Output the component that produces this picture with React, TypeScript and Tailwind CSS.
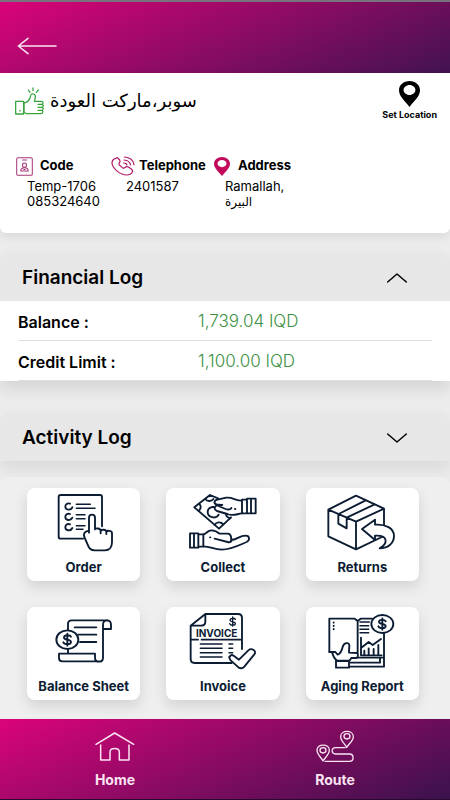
import React, { useState } from 'react';

const stroke = {
  fill: 'none',
  stroke: 'currentColor',
  strokeLinecap: 'round' as const,
  strokeLinejoin: 'round' as const,
};

function BackArrow() {
  return (
    <svg viewBox="0 0 120 54" className="h-[18px] w-10" {...stroke} strokeWidth="4.5" aria-hidden="true">
      <path d="M117 27H4M33 4 4 27l29 23" />
    </svg>
  );
}

function ThumbUp() {
  return (
    <svg viewBox="44 262 87 84" className="h-7 w-[29px]" {...stroke} strokeWidth="3.8" aria-hidden="true">
      <path d="M46 305h24v38H46zM59 332v2M98 265v8M84 271l5 7M114 271l-6 7" />
      <path d="M70 309h5c9-3 13-10 15-17 1-8 4-10 9-9 5 1 7 5 6 11l-3 11h21c7 0 7 9 0 9h-10M123 314c8 0 8 9 0 9h-10M123 323c8 0 7 9 0 9h-10M123 332c6 0 6 10-1 10H82c-5 0-6-3-12-3M71 310v28" />
    </svg>
  );
}

function Pin({ className }: { className: string }) {
  return (
    <svg viewBox="0 0 64 78" className={className} fill="currentColor" preserveAspectRatio="none" aria-hidden="true">
      <path
        fillRule="evenodd"
        d="M32 0C14 0 0 12 0 28c0 19 19 33 32 50 13-17 32-31 32-50C64 12 50 0 32 0Zm0 12c10 0 18 7 18 15s-8 15-18 15-18-7-18-15 8-15 18-15Z"
      />
    </svg>
  );
}

function CodeBadge() {
  return (
    <svg viewBox="50 466 50 56" className="h-[19px] w-[17px]" {...stroke} strokeWidth="3" aria-hidden="true">
      <rect x="52" y="468" width="46" height="52" rx="4" />
      <path d="M69 475h12M64 507c0-8 5-9 11-9s11 1 11 9ZM73 503h4" />
      <circle cx="75" cy="490" r="6" />
    </svg>
  );
}

function Phone() {
  return (
    <svg viewBox="335 466 72 60" className="h-5 w-6 shrink-0" {...stroke} strokeWidth="3.6" aria-hidden="true">
      <path d="M350 473c-8 2-12 8-12 14 1 17 26 36 44 36 8 0 14-3 17-9 2-4 0-7-4-10l-8-5c-4-2-7-1-11 2-2 2-5 2-7 0l-9-8c-2-2-2-4 0-6 3-3 3-6 1-9l-6-6c-1-1-3-1-5 1Z" />
      <path d="M375 469c16 1 28 10 29 23M374 478c11 1 18 6 20 15M373 487c6 0 9 2 10 6" />
    </svg>
  );
}

function Chevron({ open }: { open: boolean }) {
  return (
    <svg viewBox="0 0 60 30" className="h-[10px] w-5" {...stroke} strokeWidth="4.5" aria-hidden="true">
      <path d={open ? 'M2 27 30 3l28 24' : 'M2 3l28 24L58 3'} />
    </svg>
  );
}

function TileIcon({ children }: { children: React.ReactNode }) {
  return (
    <svg viewBox="82 36 216 180" className="h-[60px] w-[72px]" {...stroke} strokeWidth="5.6" aria-hidden="true">
      {children}
    </svg>
  );
}

const orderIcon = (
  <TileIcon>
    <path d="M187 176h-67c-4 0-6-2-6-6V51c0-4 2-6 6-6h118c4 0 6 2 6 6v88" />
    <path d="M148 71c-8-3-14 2-14 9 0 10 16 13 21 2M148 102c-8-3-14 2-14 9 0 10 16 13 21 2M148 133c-8-3-14 2-14 9 0 10 16 13 21 2" />
    <path d="M167 73h42M167 85h56M167 104h26M167 116h26M167 137h26M167 148h20" strokeWidth="4.5" />
    <path
      d="M205 158v-45c0-12 18-12 18 0v35c2-4 16-4 17 4 3-4 16-4 17 3 4-4 17-4 17 5v27c0 14-8 24-21 24h-31c-11 0-17-6-20-15l-11-25c-3-9-1-17 14-19M240 152v8M257 154v8"
      fill="#fff"
    />
  </TileIcon>
);

const collectIcon = (
  <TileIcon>
    <path d="m151 45-47 37 74 64 36-34M151 45l24 10" />
    <path d="M137 57c3 7 18 9 24 0M118 71c8 6 6 15-1 22M165 135c4-9 18-11 26-2M200 98c-3 8 2 15 12 17" />
    <path d="M162 81c-11-1-18 6-18 15 0 16 25 23 33 8" />
    <path
      d="M247 62c-21 0-27-11-47-9l-27 6c-12 3-11 14 1 15l14 1-16 1c-10 4-9 14 0 17l31 9c16 7 25 1 44-2M176 78l22 9c8 3 16 1 17-3"
      fill="#fff"
    />
    <path d="M247 59h15v41h-15zM262 56h26v44h-26zM274 56v44" fill="#fff" />
    <path d="M226 87h1M91 160h25v43H91zM116 163h15v37h-15zM103 160v43" />
    <path d="M131 163c9 0 12-12 24-12 14 0 18 4 24 10h25c12 0 12 18 9 24M165 176l39 10c12 3 15-7 10-12M214 180c18 0 24-13 44-13 13 0 13 14 3 19-23 10-47 23-75 23-25 0-32-10-55-10M151 172h1" />
  </TileIcon>
);

const returnsIcon = (
  <TileIcon>
    <path d="m89 89 83-42 84 39v82l-84 40-83-39ZM89 89l83 36 84-39M172 125v83M120 102l81-41M144 113l84-40M119 103v28l25 14v-32" />
    <path
      d="m190 147 39-28v15c32-2 57 10 57 34 0 21-17 37-43 37 23-13 29-40-14-38v13Z"
      fill="#fff"
    />
  </TileIcon>
);

const balanceIcon = (
  <TileIcon>
    <path d="M142 93V75c0-7 4-11 11-11h105c8 0 13 5 13 13v13h-24M260 64c-8 0-13 5-13 13v99c0 16-24 16-24 0v-12H115v14c0 6 4 9 10 9h110M142 148v15" />
    <path d="M162 85h65M173 107h54M178 129h49" />
    <ellipse cx="140" cy="122" rx="33" ry="28" fill="#fff" />
    <path d="M151 113c-3-6-21-6-21 3 0 8 21 4 21 13 0 9-20 8-23 1M140 104v36" />
  </TileIcon>
);

const invoiceIcon = (
  <TileIcon>
    <path d="M93 80v100c0 7 5 12 12 12h111M247 150V57c0-7-5-12-12-12h-98L93 80h30c9 0 14-5 14-12V45M93 122h22M126 122h116" />
    <path d="M122 135h65M122 148h65M122 161h65M122 174h65M208 135h11M208 148h11M208 161h11M208 174h4" strokeWidth="4.5" />
    <path d="M227 61c-3-5-16-4-16 3 0 6 16 3 16 9 0 8-15 7-17 1M219 54v27" strokeWidth="4" />
    <text
      x="171"
      y="113"
      textAnchor="middle"
      fontSize="30"
      fontWeight="700"
      fontFamily="Inter, sans-serif"
      fill="currentColor"
      stroke="none"
    >
      INVOICE
    </text>
    <path
      d="m222 170 16 12 28-28c10-9 26 2 18 12l-30 37c-6 7-15 6-20 0l-21-19c-8-9 0-20 9-14Z"
      fill="#fff"
    />
  </TileIcon>
);

const agingIcon = (
  <TileIcon>
    <path d="M220 59h-34l-9 7v94M94 158H92V59h76l9 7M256 100v103H152M244 177v14h-88M177 176h79M105 70v1M105 80v1M105 90v1" />
    <path d="M184 69h28M184 80h26M184 91h26M184 101h26" strokeWidth="4.5" />
    <path d="M187 116v53h62M190 145l20-16 12 9 25-18M197 155v14M210 148v21M225 150v19M239 138v31" />
    <path
      d="M92 159h18l7 8c8-3 12-10 15-23 3-12 20-17 20-4l-1 21 24 1c4 0 4 15-3 15h-14l-6 9h-36c-10-8-14-18-16-27ZM112 185h39v21h-39z"
      fill="#fff"
    />
    <ellipse cx="251" cy="75" rx="33" ry="27" fill="#fff" />
    <path d="M261 67c-3-6-20-6-20 2 0 8 20 4 20 12 0 9-19 8-22 1M251 58v34" />
  </TileIcon>
);

const tiles = [
  { label: 'Order', icon: orderIcon },
  { label: 'Collect', icon: collectIcon },
  { label: 'Returns', icon: returnsIcon },
  { label: 'Balance Sheet', icon: balanceIcon },
  { label: 'Invoice', icon: invoiceIcon },
  { label: 'Aging Report', icon: agingIcon },
];

const balances = [
  { label: 'Balance :', value: '1,739.04 IQD' },
  { label: 'Credit Limit :', value: '1,100.00 IQD' },
];

function LogHeader({ title, open, onToggle }: { title: string; open: boolean; onToggle: () => void }) {
  return (
    <button
      type="button"
      aria-expanded={open}
      onClick={onToggle}
      className="flex h-[49px] w-full items-center justify-between rounded-t-xl bg-[#e7e7e7] pt-[3px] pr-[43px] pl-[22px] text-left text-[19px] font-semibold"
    >
      {title}
      <Chevron open={open} />
    </button>
  );
}

function Detail({ icon, title, children }: { icon: React.ReactNode; title: string; children: React.ReactNode }) {
  return (
    <div>
      <h2 className="flex h-5 items-center text-[13px] font-bold whitespace-nowrap">
        {icon}
        {title}
      </h2>
      <div className="mt-[3px] pl-[11px] text-[13px] leading-[15px]">{children}</div>
    </div>
  );
}

export default function App() {
  const [financialOpen, setFinancialOpen] = useState(true);
  const [activityOpen, setActivityOpen] = useState(false);

  return (
    <div className="flex min-h-screen flex-col bg-[#ececec] font-['Inter','DejaVu_Sans',sans-serif] text-black">
      <header className="flex h-[73px] items-center border-t-2 border-[#77727b] bg-[linear-gradient(157deg,#d60478_3%,#42134f_100%)] px-[17px] pt-[17px]">
        <button type="button" aria-label="Back" className="text-[#fbe4f2]">
          <BackArrow />
        </button>
      </header>

      <main>
        <section className="h-40 rounded-b-md bg-white pt-2 shadow-[0_4px_10px_rgba(0,0,0,0.08)]">
          <div className="flex items-start justify-between pr-[13px] pl-[15px]">
            <div className="flex items-center gap-1.5 pt-1.5">
              <span className="text-[#36a43c]">
                <ThumbUp />
              </span>
              <h1 dir="rtl" className="font-['DejaVu_Sans',sans-serif] text-lg leading-7">
                سوبر،ماركت العودة
              </h1>
            </div>
            <button type="button" className="flex flex-col items-center text-[9px] leading-3 font-bold">
              <Pin className="mb-[2px] h-[26px] w-[21px]" />
              Set Location
            </button>
          </div>

          <div className="grid grid-cols-[99px_99px_1fr] pt-[35px] pl-4">
            <Detail
              title="Code"
              icon={
                <span className="mr-[7px] text-[#a83678]">
                  <CodeBadge />
                </span>
              }
            >
              Temp-1706
              <br />
              085324640
            </Detail>
            <Detail
              title="Telephone"
              icon={
                <span className="mr-1 -ml-1 text-[#b01a66]">
                  <Phone />
                </span>
              }
            >
              2401587
            </Detail>
            <Detail
              title="Address"
              icon={
                <span className="mr-2 text-[#c1095c]">
                  <Pin className="h-[19px] w-4" />
                </span>
              }
            >
              Ramallah,
              <br />
              <span className="font-['DejaVu_Sans',sans-serif] text-xs leading-[15px]">البيرة</span>
            </Detail>
          </div>
        </section>

        <section className="mt-[19px] rounded-t-xl shadow-[0_8px_16px_rgba(0,0,0,0.10)]">
          <LogHeader title="Financial Log" open={financialOpen} onToggle={() => setFinancialOpen(!financialOpen)} />
          {financialOpen && (
            <dl className="bg-white px-[18px]">
              {balances.map((row) => (
                <div key={row.label} className="flex h-10 items-center border-b border-[#dedede] pt-[3px]">
                  <dt className="w-[180px] text-base font-semibold">{row.label}</dt>
                  <dd className="text-[17px] font-light text-[#3d9145]">{row.value}</dd>
                </div>
              ))}
            </dl>
          )}
        </section>

        <section className="mt-[31px] rounded-t-xl shadow-[0_8px_16px_rgba(0,0,0,0.08)]">
          <LogHeader title="Activity Log" open={activityOpen} onToggle={() => setActivityOpen(!activityOpen)} />
        </section>

        <section className="mt-4 grid grid-cols-3 gap-[26px] rounded-t-lg bg-[#efefef] pt-[11px] pr-[31px] pb-[18px] pl-[27px]">
          {tiles.map((tile) => (
            <button
              key={tile.label}
              type="button"
              className="flex flex-col items-center rounded-lg bg-white pt-1 pb-1 text-[13px] leading-5 font-bold whitespace-nowrap text-[#0b1c33] shadow-[0_6px_14px_rgba(0,0,0,0.12)]"
            >
              {tile.icon}
              <span className="mt-[5px]">{tile.label}</span>
            </button>
          ))}
        </section>
      </main>

      <nav className="mt-auto grid h-[81px] grid-cols-2 border-b border-[#2a0a2c] bg-[linear-gradient(157deg,#d60478_3%,#3a124c_100%)] px-[5px] pt-3 text-sm leading-5 font-bold text-[#fbe4f2]">
        <a href="#home" className="flex flex-col items-center gap-2">
          <svg viewBox="286 94 120 93" className="h-[31px] w-10" {...stroke} strokeWidth="4.5" aria-hidden="true">
            <path d="m289 134 56-34 57 34M303 136v45h28v-24c0-14 28-14 28 0v24h29v-45" />
          </svg>
          Home
        </a>
        <a href="#route" className="flex flex-col items-center gap-2">
          <svg viewBox="946 94 120 93" className="h-[31px] w-10 overflow-visible" {...stroke} strokeWidth="4" aria-hidden="true">
            <path d="M970 184c-6-12-18-19-18-32 0-21 37-21 37 0 0 13-12 20-19 32ZM1041 143c-6-12-18-19-18-32 0-21 38-21 38 0 0 13-13 20-20 32Z" />
            <ellipse cx="970" cy="152" rx="9" ry="8" />
            <ellipse cx="1042" cy="110" rx="9" ry="8" />
            <path d="M1036 144h-28c-14 0-14 19 0 19h41c15 0 15 22 0 22h-73" />
          </svg>
          Route
        </a>
      </nav>
    </div>
  );
}
